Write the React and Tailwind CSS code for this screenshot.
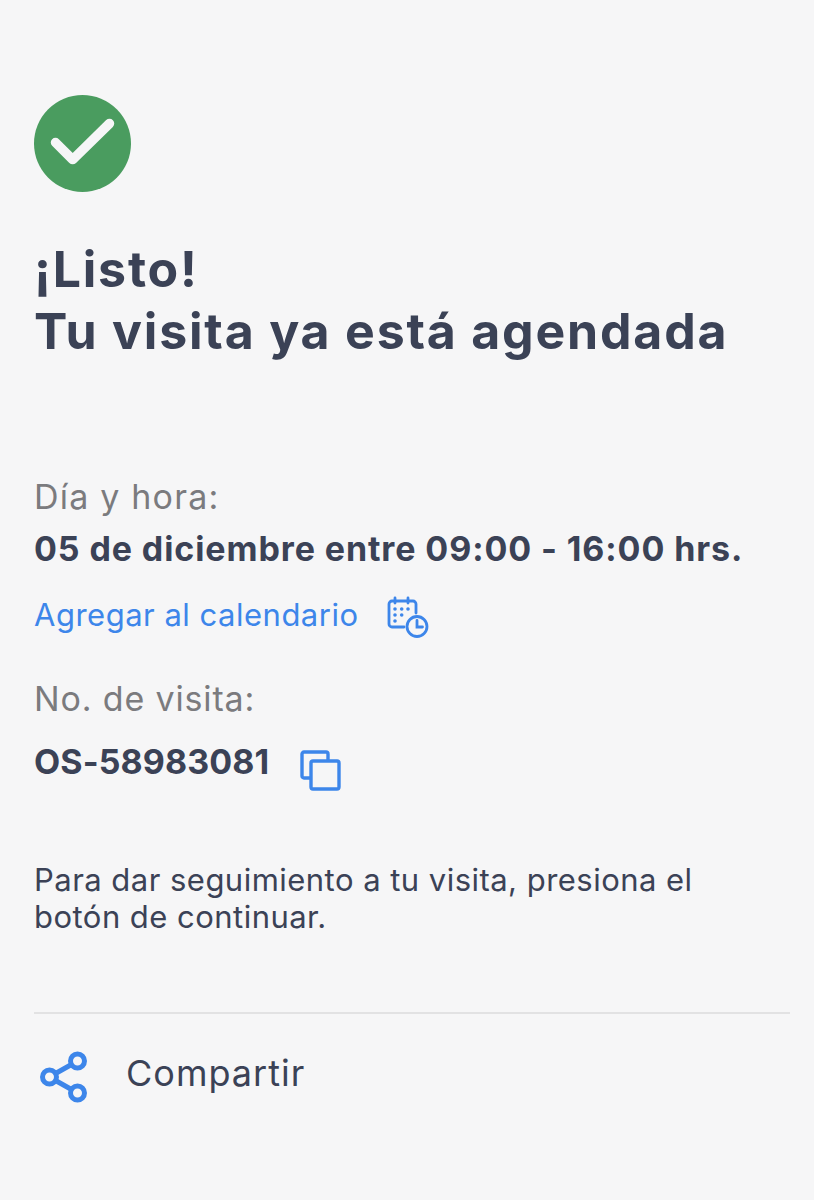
export default function App() {
  return (
    <div className="min-h-[1200px] w-full bg-[#f6f6f7] px-[34px] pt-[95px] font-['Inter',sans-serif]">

      {/* Check */}
      <svg width="97" height="97" viewBox="0 0 97 97" className="block">
        <circle cx="48.5" cy="48.5" r="48.5" fill="#4a9c5f" />
        <path d="M21.5 47.5 L38.7 64.6 L75.5 28.5" fill="none" stroke="#f6f6f7" strokeWidth="9.5" strokeLinecap="round" strokeLinejoin="round" />
      </svg>

      {/* Title */}
      <h1 className="mt-[46px] text-[50px] leading-[62px] font-bold text-[#3b4256] tracking-[1.8px]">
        ¡Listo!
        <br />
        Tu visita ya está agendada
      </h1>

      {/* Date */}
      <p className="mt-[113px] text-[34px] leading-[44px] tracking-[1.2px] text-[#7b7b7e]">Día y hora:</p>
      <p className="mt-[8px] text-[34px] leading-[44px] font-bold tracking-[0.9px] text-[#3b4256]">
        05 de diciembre entre 09:00 - 16:00 hrs.
      </p>

      <div className="mt-[22px] flex items-start gap-[28px]">
        <span className="text-[31px] leading-[44px] tracking-[0.5px] text-[#3d86ea]">Agregar al calendario</span>
        <svg width="44" height="44" viewBox="0 0 44 44" fill="none" stroke="#3d86ea" strokeWidth="2.8" strokeLinecap="round" className="mt-[3px]">
          <path d="M17 31 H5 a3 3 0 0 1 -3 -3 V8 a3 3 0 0 1 3 -3 H26 a3 3 0 0 1 3 3 V17" />
          <path d="M8 2 V7 M21 2 V7" />
          <circle cx="30" cy="30.5" r="10" />
          <path d="M30 24.5 V31 H35.5" />
          <g fill="#3d86ea" stroke="none">
            <circle cx="8" cy="13" r="1.8" />
            <circle cx="14.7" cy="13" r="1.8" />
            <circle cx="21" cy="13" r="1.8" />
            <circle cx="8" cy="19" r="1.8" />
            <circle cx="14.7" cy="19" r="1.8" />
            <circle cx="8" cy="25" r="1.8" />
          </g>
        </svg>
      </div>

      {/* Visit number */}
      <p className="mt-[37px] text-[34px] leading-[44px] tracking-[0.85px] text-[#7b7b7e]">No. de visita:</p>
      <div className="mt-[19px] flex items-start gap-[31px]">
        <span className="text-[34px] leading-[44px] font-bold tracking-[0.1px] text-[#3b4256]">OS-58983081</span>
        <svg width="42" height="42" viewBox="0 0 42 42" fill="none" stroke="#3d86ea" strokeWidth="3.4" strokeLinejoin="round" className="mt-[10px]">
          <path d="M11 28 H4 a2 2 0 0 1 -2 -2 V4 a2 2 0 0 1 2 -2 H26 a2 2 0 0 1 2 2 V10" />
          <rect x="11" y="11" width="28" height="28" rx="2" />
        </svg>
      </div>

      {/* Note */}
      <p className="mt-[69px] max-w-[720px] text-[31px] leading-[37px] tracking-[0.47px] text-[#3b4256]">
        Para dar seguimiento a tu visita, presiona el botón de continuar.
      </p>

      <div className="mt-[77px] h-[2px] w-[756px] bg-[#e2e2e3]" />

      {/* Share */}
      <div className="mt-[37px] flex items-center gap-[38px] pl-[6px]">
        <svg width="48" height="52" viewBox="0 0 48 52" fill="none" stroke="#3d86ea" strokeWidth="5">
          <circle cx="37.5" cy="10" r="7" />
          <circle cx="37.5" cy="42" r="7" />
          <circle cx="9.5" cy="26" r="7" />
          <path d="M15.5 22.5 L31.5 13.5 M15.5 29.5 L31.5 38.5" />
        </svg>
        <span className="mb-[8px] text-[36px] leading-[44px] tracking-[1px] text-[#3b4256]">Compartir</span>
      </div>
    </div>
  );
}
